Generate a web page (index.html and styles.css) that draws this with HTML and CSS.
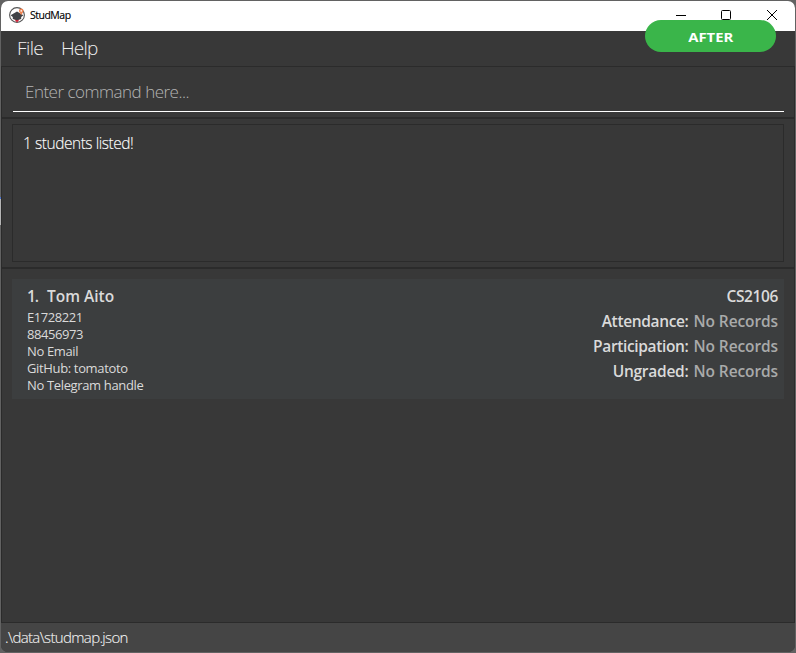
FILE: index.html
```html
<!DOCTYPE html>
<html lang="en">
<head>
<meta charset="utf-8">
<title>StudMap</title>
<link rel="stylesheet" href="styles.css">
</head>
<body>
<div class="window">
  <header class="titlebar">
    <svg class="logo" width="16" height="16" viewBox="0 0 16 16">
      <circle cx="8" cy="8" r="7.4" fill="#fff" stroke="#555" stroke-width="1.1"/>
      <path d="M5.3 12.3h5.4L8 15.5z" fill="#d51f35"/>
      <path d="M1.6 8.3 8 4.6l6.4 3.7-2.2 1.6v2L8 13.2l-4.2-1.3v-2z" fill="#414347"/>
      <path d="M12.2 1.5a2.3 2.3 0 0 1 2.1 3.3L12.2 8.2l-2-3.4a2.3 2.3 0 0 1 2-3.3z" fill="#ed8353"/>
      <circle cx="12.2" cy="3.9" r=".8" fill="#fff"/>
    </svg>
    <span class="app-name">StudMap</span>
    <svg class="controls" width="102" height="12" viewBox="0 0 102 12" fill="none" stroke="#000">
      <path d="M0 6.5h10"/>
      <rect x="45.5" y="1.5" width="9" height="9" rx="1"/>
      <path d="m91 1 10 10m0-10L91 11"/>
    </svg>
  </header>
  <nav class="menu"><span class="file">File</span><span class="help">Help</span></nav>
  <section class="command"><div class="field"><span>Enter command here...</span></div></section>
  <section class="result"><div class="output"><span>1 students listed!</span></div></section>
  <main class="list">
    <article class="card">
      <div class="details">
        <h1><span class="index">1.</span><span class="name">Tom Aito</span></h1>
        <p class="id">E1728221</p>
        <p class="phone">88456973</p>
        <p class="email">No Email</p>
        <p class="github">GitHub: tomatoto</p>
        <p class="telegram">No Telegram handle</p>
      </div>
      <div class="records">
        <p class="module">CS2106</p>
        <p><span class="attendance">Attendance:</span><span class="none">No Records</span></p>
        <p><span class="participation">Participation:</span><span class="none">No Records</span></p>
        <p><span class="ungraded">Ungraded:</span><span class="none">No Records</span></p>
      </div>
    </article>
  </main>
  <footer class="status"><span>.\data\studmap.json</span></footer>
</div>
<div class="badge"><span>AFTER</span></div>
</body>
</html>
```

FILE: styles.css
```css
* { box-sizing: border-box; }
body { margin: 0; padding: 1px; height: 653px; background: linear-gradient(#4b71c8, #4b71c8) 0 197px / 1px 2px no-repeat, linear-gradient(#b5b5b5, #b5b5b5) 0 199px / 1px 26px no-repeat, #626262; font-family: "Open Sans", "Noto Sans", sans-serif; overflow: hidden; white-space: nowrap; }
p, h1 { margin: 0; }
.window { width: 794px; height: 651px; display: flex; flex-direction: column; background: #383838; border-radius: 7px; overflow: hidden; }
.titlebar { height: 30px; flex: none; background: #fff; display: flex; align-items: center; padding: 0 17px 2px 8px; color: #000; }
.app-name { font-size: 10.5px; margin-left: 5px; letter-spacing: -.5px; -webkit-text-stroke: .15px; }
.controls { margin-left: auto; }
.menu { height: 35px; flex: none; display: flex; padding-left: 16px; font-size: 19px; line-height: 35px; font-weight: 300; color: #eee; }
.file { width: 44px; letter-spacing: -.6px; }
.help { letter-spacing: -.8px; }
.command { height: 53px; flex: none; border: solid #2b2b2b; border-width: 1px 1px 2px; padding: 5px 10px 5px 11px; }
.field { height: 40px; border-bottom: 1px solid #fff; padding-left: 12px; line-height: 39px; font-size: 17px; font-weight: 300; color: #b4b4b4; letter-spacing: -.5px; }
.result { height: 150px; flex: none; border: solid #2b2b2b; border-width: 0 1px 2px; padding: 5px 10px; }
.output { height: 138px; border: 1px solid #2b2b2b; padding: 7px 10px; font-size: 15.5px; line-height: 22px; font-weight: 300; color: #fff; letter-spacing: -.46px; -webkit-text-stroke: .1px; }
.list { flex: 1; border: solid #2b2b2b; border-width: 0 1px; padding: 10px; }
.card { height: 120px; background: #3c3e3f; display: flex; justify-content: space-between; padding: 5px 6px 0 15px; color: #dadada; }
.details { font-size: 13px; line-height: 17px; letter-spacing: -.35px; }
.id, .phone { letter-spacing: -.45px; }
.details h1 { font-size: 15.5px; line-height: 25px; font-weight: 600; display: flex; letter-spacing: 0; }
.index { width: 20px; letter-spacing: -1px; }
.records { font-size: 15.5px; line-height: 25px; font-weight: 600; text-align: right; letter-spacing: -.37px; }
.attendance, .participation { letter-spacing: -.35px; }
.ungraded { letter-spacing: -.25px; }
.none { color: #a9aaaa; margin-left: 5px; letter-spacing: -.1px; }
.status { height: 30px; flex: none; border-top: 1px solid #2b2b2b; background: #454545; padding-left: 4px; color: #f4f4f4; font-size: 15px; line-height: 28px; font-weight: 300; letter-spacing: -.65px; -webkit-text-stroke: .1px; }
.badge { position: absolute; left: 645px; top: 20px; width: 131px; height: 32px; border-radius: 16px; background: #3ab54a; color: #fff; text-align: center; line-height: 34px; font-size: 13px; font-weight: 700; }
.badge span { display: inline-block; transform: scaleX(1.14); }
```
